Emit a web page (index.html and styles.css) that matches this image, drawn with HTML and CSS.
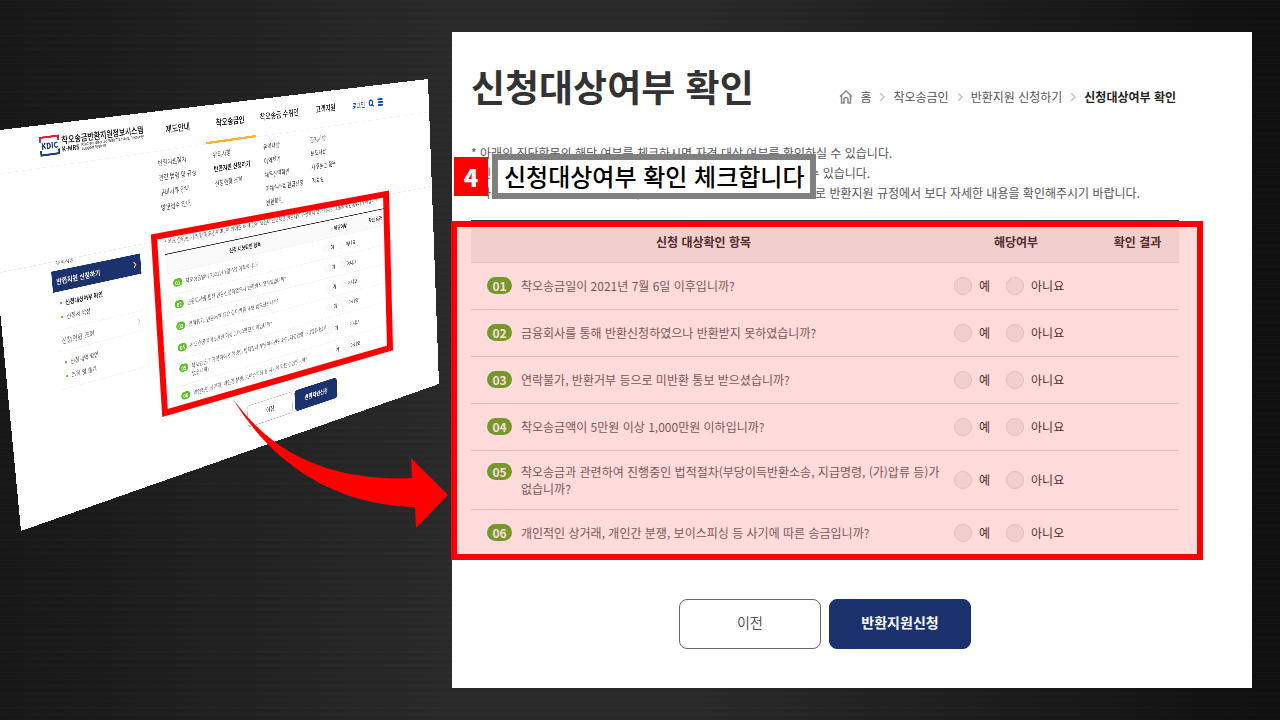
FILE: index.html
```html
<!DOCTYPE html>
<html lang="ko">
<head>
    <meta charset="UTF-8">
    <meta name="viewport" content="width=device-width, initial-scale=1.0">
    <title>신청대상여부 확인</title>
    <link rel="stylesheet" href="styles.css">
</head>
<body>
    <div class="slide">

        <!-- tilted page -->
        <div class="preview">
            <header class="site-header">
                <div class="logo">
                    <svg width="46" height="38" viewBox="0 0 46 38">
                        <path d="M2 11V2H44V11" fill="none" stroke="#d8203a" stroke-width="4"/>
                        <path d="M2 27V36H44V27" fill="none" stroke="#1b3a86" stroke-width="4"/>
                        <text x="23" y="25" class="logo-mark" text-anchor="middle">KDIC</text>
                    </svg>
                    <div>
                        <strong class="logo-name">착오송금반환지원정보시스템</strong>
                        <div class="logo-sub">
                            <b>K-MRS</b>
                            <span>KDIC-Misdirected Wire Transfers/Recovery<br>Support System</span>
                        </div>
                    </div>
                </div>
                <nav class="main-nav">
                    <a href="#">제도안내</a>
                    <a href="#" class="on">착오송금인</a>
                    <a href="#">착오송금 수취인</a>
                    <a href="#">고객지원</a>
                </nav>
                <div class="util">
                    <a href="#">로그인</a>
                    <svg width="20" height="20" viewBox="0 0 20 20" fill="none" stroke="#1b4fa8" stroke-width="4"><circle cx="9" cy="9" r="6"/><path d="M13 13l5 5"/></svg>
                    <svg width="20" height="20" viewBox="0 0 20 20" stroke="#1b4fa8" stroke-width="4"><path d="M1 3h18M1 10h18M1 17h18"/></svg>
                </div>
            </header>
            <div class="submenu">
                <ul>
                    <li>반환지원절차</li>
                    <li>관련 법령 및 규정</li>
                    <li>구비서류 안내</li>
                    <li>방문접수 안내</li>
                </ul>
                <ul>
                    <li>유의사항</li>
                    <li><b>반환지원 신청하기</b></li>
                    <li>신청현황 조회</li>
                </ul>
                <ul>
                    <li>유의사항</li>
                    <li>이의제기</li>
                    <li>채무잔액확인</li>
                    <li>이체수수료 환급신청</li>
                    <li>반환확인</li>
                </ul>
                <ul>
                    <li>공지사항</li>
                    <li>보도자료</li>
                    <li>자주묻는 질문</li>
                    <li>자료실</li>
                </ul>
            </div>
            <div class="preview-body">
                <aside class="side">
                    <div class="side-cut">유의사항</div>
                    <a href="#" class="side-on">반환지원 신청하기 <svg width="10" height="14" viewBox="0 0 10 14" fill="none" stroke="#f5b335" stroke-width="3"><path d="M2 1l5 6-5 6"/></svg></a>
                    <ul>
                        <li><b>신청대상여부 확인</b></li>
                        <li>신청서 작성</li>
                    </ul>
                    <a href="#" class="side-link">신청현황 조회 <svg width="10" height="14" viewBox="0 0 10 14" fill="none" stroke="#ccc" stroke-width="2"><path d="M2 1l5 6-5 6"/></svg></a>
                    <ul>
                        <li>신청내역 확인</li>
                        <li>조회 및 출력</li>
                    </ul>
                </aside>
                <form class="preview-main">
                    <p class="preview-note">* 아래 항목은 기본 항목 요건이며, 이 외에도 여러 항목 요건이 있으므로 반환지원 규정에서 보다 자세한 내용을 확인해주시기 바랍니다.</p>
                    <table class="check">
                        <thead>
                            <tr><th class="col-item">신청 대상확인 항목</th><th class="col-yn">해당여부</th><th class="col-res">확인 결과</th></tr>
                        </thead>
                        <tbody>
                            <tr>
                                <td><div class="q"><span class="num">01</span><span>착오송금일이 2021년 7월 6일 이후입니까?</span></div></td>
                                <td><div class="yn"><label><input type="radio" name="p1">예</label><label><input type="radio" name="p1">아니요</label></div></td>
                                <td></td>
                            </tr>
                            <tr>
                                <td><div class="q"><span class="num">02</span><span>금융회사를 통해 반환신청하였으나 반환받지 못하였습니까?</span></div></td>
                                <td><div class="yn"><label><input type="radio" name="p2">예</label><label><input type="radio" name="p2">아니요</label></div></td>
                                <td></td>
                            </tr>
                            <tr>
                                <td><div class="q"><span class="num">03</span><span>연락불가, 반환거부 등으로 미반환 통보 받으셨습니까?</span></div></td>
                                <td><div class="yn"><label><input type="radio" name="p3">예</label><label><input type="radio" name="p3">아니요</label></div></td>
                                <td></td>
                            </tr>
                            <tr>
                                <td><div class="q"><span class="num">04</span><span>착오송금액이 5만원 이상 1,000만원 이하입니까?</span></div></td>
                                <td><div class="yn"><label><input type="radio" name="p4">예</label><label><input type="radio" name="p4">아니요</label></div></td>
                                <td></td>
                            </tr>
                            <tr>
                                <td><div class="q"><span class="num">05</span><span>착오송금과 관련하여 진행중인 법적절차(부당이득반환소송, 지급명령, (가)압류 등)가<br>없습니까?</span></div></td>
                                <td><div class="yn"><label><input type="radio" name="p5">예</label><label><input type="radio" name="p5">아니요</label></div></td>
                                <td></td>
                            </tr>
                            <tr>
                                <td><div class="q"><span class="num">06</span><span>개인적인 상거래, 개인간 분쟁, 보이스피싱 등 사기에 따른 송금입니까?</span></div></td>
                                <td><div class="yn"><label><input type="radio" name="p6">예</label><label><input type="radio" name="p6">아니오</label></div></td>
                                <td></td>
                            </tr>
                        </tbody>
                    </table>
                    <div class="buttons">
                        <button type="button" class="btn">이전</button>
                        <button type="button" class="btn btn-blue">반환지원신청</button>
                    </div>
                </form>
            </div>
        </div>

        <!-- red frame and arrow -->
        <svg class="marks" width="452" height="720" viewBox="0 0 452 720">
            <path d="M154 237L386 194L390 348L165 413Z" fill="none" stroke="#f00" stroke-width="6"/>
            <path d="M233 399C262 438 310 482 412 478L411 458L448 495L416 528L415 507C330 505 270 460 233 399Z" fill="#f00"/>
        </svg>

        <main class="page">
            <div class="page-head">
                <h1>신청대상여부 확인</h1>
                <nav class="crumbs">
                    <svg width="14" height="14" viewBox="0 0 14 14" fill="none" stroke="#888" stroke-width="1.5"><path d="M1 6.5L7 1l6 5.500M2.500 5.500V13H5V9.500a2 2 0 0 1 4 0V13h2.500V5.500"/></svg>
                    <a href="#">홈</a>
                    <svg class="sep" width="6" height="8" viewBox="0 0 6 8" fill="none" stroke="#c4c4c4" stroke-width="1.5"><path d="M1 0l4 4-4 4"/></svg>
                    <a href="#">착오송금인</a>
                    <svg class="sep" width="6" height="8" viewBox="0 0 6 8" fill="none" stroke="#c4c4c4" stroke-width="1.5"><path d="M1 0l4 4-4 4"/></svg>
                    <a href="#">반환지원 신청하기</a>
                    <svg class="sep" width="6" height="8" viewBox="0 0 6 8" fill="none" stroke="#c4c4c4" stroke-width="1.5"><path d="M1 0l4 4-4 4"/></svg>
                    <a href="#" class="here">신청대상여부 확인</a>
                </nav>
            </div>

            <div class="notes">
                <p>* 아래의 진단항목의 해당 여부를 체크하시면 자격 대상 여부를 확인하실 수 있습니다.</p>
                <p>* 진단결과에 따라 신청 대상에 해당하는 경우 반환지원 신청을 하실 수 있습니다.</p>
                <p>* 아래 항목은 기본 항목 요건이며, 이 외에도 여러 항목 요건이 있으므로 반환지원 규정에서 보다 자세한 내용을 확인해주시기 바랍니다.</p>
                <div class="step">
                    <span class="step-num">4</span>
                    <strong class="step-text">신청대상여부 확인 체크합니다</strong>
                </div>
            </div>

            <form>
                <div class="table-wrap">
                    <table class="check">
                        <thead>
                            <tr><th class="col-item">신청 대상확인 항목</th><th class="col-yn">해당여부</th><th class="col-res">확인 결과</th></tr>
                        </thead>
                        <tbody>
                            <tr>
                                <td><div class="q"><span class="num">01</span><span>착오송금일이 2021년 7월 6일 이후입니까?</span></div></td>
                                <td><div class="yn"><label><input type="radio" name="q1">예</label><label><input type="radio" name="q1">아니요</label></div></td>
                                <td></td>
                            </tr>
                            <tr>
                                <td><div class="q"><span class="num">02</span><span>금융회사를 통해 반환신청하였으나 반환받지 못하였습니까?</span></div></td>
                                <td><div class="yn"><label><input type="radio" name="q2">예</label><label><input type="radio" name="q2">아니요</label></div></td>
                                <td></td>
                            </tr>
                            <tr>
                                <td><div class="q"><span class="num">03</span><span>연락불가, 반환거부 등으로 미반환 통보 받으셨습니까?</span></div></td>
                                <td><div class="yn"><label><input type="radio" name="q3">예</label><label><input type="radio" name="q3">아니요</label></div></td>
                                <td></td>
                            </tr>
                            <tr>
                                <td><div class="q"><span class="num">04</span><span>착오송금액이 5만원 이상 1,000만원 이하입니까?</span></div></td>
                                <td><div class="yn"><label><input type="radio" name="q4">예</label><label><input type="radio" name="q4">아니요</label></div></td>
                                <td></td>
                            </tr>
                            <tr>
                                <td><div class="q"><span class="num">05</span><span>착오송금과 관련하여 진행중인 법적절차(부당이득반환소송, 지급명령, (가)압류 등)가<br>없습니까?</span></div></td>
                                <td><div class="yn"><label><input type="radio" name="q5">예</label><label><input type="radio" name="q5">아니요</label></div></td>
                                <td></td>
                            </tr>
                            <tr>
                                <td><div class="q"><span class="num">06</span><span>개인적인 상거래, 개인간 분쟁, 보이스피싱 등 사기에 따른 송금입니까?</span></div></td>
                                <td><div class="yn"><label><input type="radio" name="q6">예</label><label><input type="radio" name="q6">아니오</label></div></td>
                                <td></td>
                            </tr>
                        </tbody>
                    </table>
                    <div class="highlight"></div>
                </div>
                <div class="buttons">
                    <button type="button" class="btn">이전</button>
                    <button type="button" class="btn btn-blue">반환지원신청</button>
                </div>
            </form>
        </main>
    </div>
</body>
</html>
```
FILE: styles.css
```css
* {
    box-sizing: border-box;
}

body {
    margin: 0;
    font-family: "Noto Sans CJK KR", "Noto Sans", sans-serif;
    font-size: 12px;
    color: #555;
    background: #1c1c1c;
}

h1, p, ul {
    margin: 0;
    padding: 0;
}

ul {
    list-style: none;
}

a {
    color: inherit;
    text-decoration: none;
}

.slide {
    position: relative;
    display: flex;
    min-height: 100vh;
    padding: 32px 28px 32px 452px;
    overflow: hidden;
    background:
        repeating-linear-gradient(180deg, rgba(255, 255, 255, 0.01) 0 1px, transparent 1px 3px, rgba(0, 0, 0, 0.06) 3px 4px, transparent 4px 7px),
        linear-gradient(90deg, #181818 0%, #2a2a2a 34%, #2a2a2a 55%, #111 98%);
}

/* ---- page on the right ---- */
.page {
    flex: 1;
    padding: 0 73px 39px 19px;
    background: #fff;
}

.page-head {
    display: flex;
    justify-content: space-between;
    align-items: center;
    height: 111px;
    padding-right: 3px;
}

h1 {
    padding-bottom: 4px;
    font-size: 37px;
    line-height: 44px;
    color: #333;
}

.crumbs {
    display: flex;
    align-items: center;
    gap: 7px;
    padding-top: 18px;
    line-height: 18px;
}

.crumbs .sep {
    margin: 0 1px;
}

.crumbs .here {
    font-weight: bold;
    color: #222;
}

.notes {
    position: relative;
    height: 77px;
    line-height: 20px;
    white-space: nowrap;
}

.step {
    position: absolute;
    top: 11px;
    left: -17px;
    display: flex;
    align-items: center;
    gap: 4px;
}

.step-num {
    width: 34px;
    background: #f00;
    color: #fff;
    font-size: 24px;
    font-weight: 900;
    line-height: 39px;
    text-align: center;
}

.step-text {
    padding: 0 6px 2px;
    border: 6px solid #808080;
    background: #fff;
    color: #000;
    font-size: 24px;
    font-weight: 500;
    line-height: 31px;
}

.table-wrap {
    position: relative;
}

.highlight {
    position: absolute;
    top: 1px;
    right: -24px;
    bottom: -3px;
    left: -20px;
    border: 6px solid #f00;
    background: rgba(255, 0, 0, 0.14);
    background-clip: padding-box;
    pointer-events: none;
}

/* ---- check table ---- */
.check {
    width: 100%;
    border-collapse: collapse;
    table-layout: fixed;
    border-top: 2px solid #333;
    line-height: 17px;
}

.check th {
    height: 41px;
    padding: 0;
    border-bottom: 1px solid #ddd;
    background: #f0f0f0;
    color: #333;
}

.check td {
    height: 47px;
    padding: 12px 0;
    border-bottom: 1px solid #ddd;
    color: #666;
}

.col-yn {
    width: 160px;
}

.col-res {
    width: 83px;
}

.q {
    display: flex;
    gap: 9px;
    padding-left: 16px;
    white-space: nowrap;
}

.num {
    flex-shrink: 0;
    width: 25px;
    height: 17px;
    border-radius: 9px;
    background: #5fb232;
    color: #fff;
    font-weight: bold;
    text-align: center;
}

.yn {
    display: flex;
    gap: 16px;
    padding-left: 18px;
}

.yn label {
    display: flex;
    align-items: center;
    gap: 7px;
    color: #333;
}

.yn input {
    appearance: none;
    width: 18px;
    height: 18px;
    margin: 0;
    border: 1px solid #ddd;
    border-radius: 50%;
    background: #f0f0f0;
}

.buttons {
    display: flex;
    justify-content: center;
    gap: 8px;
    margin-top: 42px;
}

.btn {
    width: 142px;
    height: 50px;
    padding: 0 0 3px;
    border: 1px solid #666;
    border-radius: 8px;
    background: #fff;
    color: #555;
    font-family: inherit;
    font-size: 14px;
    cursor: pointer;
}

.btn-blue {
    border-color: #1b326f;
    background: #1b326f;
    color: #fff;
    font-weight: bold;
}

/* ---- tilted page on the left ---- */
.preview {
    position: absolute;
    top: 0;
    left: 0;
    width: 1280px;
    height: 780px;
    background: #fff;
    transform-origin: 0 0;
    transform: matrix3d(0.45969, -0.02073, 0, 0.0002618, 0.05022, 0.5495, 0, 0.00007151, 0, 0, 1, 0, -17, 132, 0, 1);
}

.site-header {
    display: flex;
    height: 82px;
    padding-left: 122px;
    border-bottom: 1px solid #eee;
}

.logo {
    display: flex;
    align-items: center;
    gap: 5px;
    width: 272px;
    color: #222;
    white-space: nowrap;
}

.logo-mark {
    font-size: 16px;
    font-weight: 900;
    fill: #1b3a86;
}

.logo-name {
    display: block;
    font-size: 17px;
    line-height: 20px;
}

.logo-sub {
    display: flex;
    gap: 5px;
    font-size: 13px;
    line-height: 16px;
}

.logo-sub span {
    font-size: 8px;
    line-height: 8px;
}

.main-nav {
    display: grid;
    grid-template-columns: repeat(4, 148px);
}

.main-nav a {
    border-bottom: 5px solid transparent;
    color: #222;
    font-size: 18px;
    font-weight: 500;
    line-height: 77px;
    text-align: center;
    white-space: nowrap;
}

.main-nav .on {
    border-color: #f5b335;
    font-weight: bold;
}

.util {
    display: flex;
    align-items: center;
    gap: 12px;
    padding-left: 16px;
    color: #1b4fa8;
    font-size: 16px;
    font-weight: 500;
}

.submenu {
    display: grid;
    grid-template-columns: 152px 148px 148px 1fr;
    height: 185px;
    padding: 8px 0 0 408px;
    border-bottom: 1px solid #e4e4e4;
    font-size: 14px;
    line-height: 31px;
}

.submenu b {
    color: #222;
}

.preview-body {
    display: flex;
    gap: 66px;
    padding-left: 123px;
}

.side {
    width: 221px;
}

.side-cut {
    height: 18px;
    padding-left: 12px;
    line-height: 4px;
    overflow: hidden;
}

.side a {
    display: flex;
    justify-content: space-between;
    align-items: center;
    padding: 0 10px;
    font-size: 14px;
    line-height: 42px;
}

.side .side-on {
    background: #1b326f;
    color: #fff;
    font-weight: bold;
}

.side .side-link {
    border-top: 1px solid #eee;
    border-bottom: 1px solid #eee;
    color: #777;
}

.side ul {
    padding: 10px 14px;
    line-height: 28px;
}

.side ul:last-child {
    border-bottom: 1px solid #eee;
}

.side li::before {
    content: "";
    display: inline-block;
    width: 5px;
    height: 5px;
    margin: 0 8px 3px 0;
    border-radius: 50%;
    background: #5fb232;
}

.side li b {
    color: #222;
}

.preview-main {
    width: 696px;
}

.preview-note {
    height: 30px;
    line-height: 12px;
    white-space: nowrap;
}

.preview .check th {
    background: #fafafa;
}

.preview .check th,
.preview .check td {
    border-color: #eee;
}

.preview .yn input {
    border-color: #eee;
    background: #fafafa;
}

.preview .num {
    background: #5fbf2b;
}

.preview .btn {
    border-color: #aaa;
}

.preview .btn-blue {
    border-color: #1b326f;
}

/* ---- frame and arrow over the tilted page ---- */
.marks {
    position: absolute;
    top: 0;
    left: 0;
}
```
